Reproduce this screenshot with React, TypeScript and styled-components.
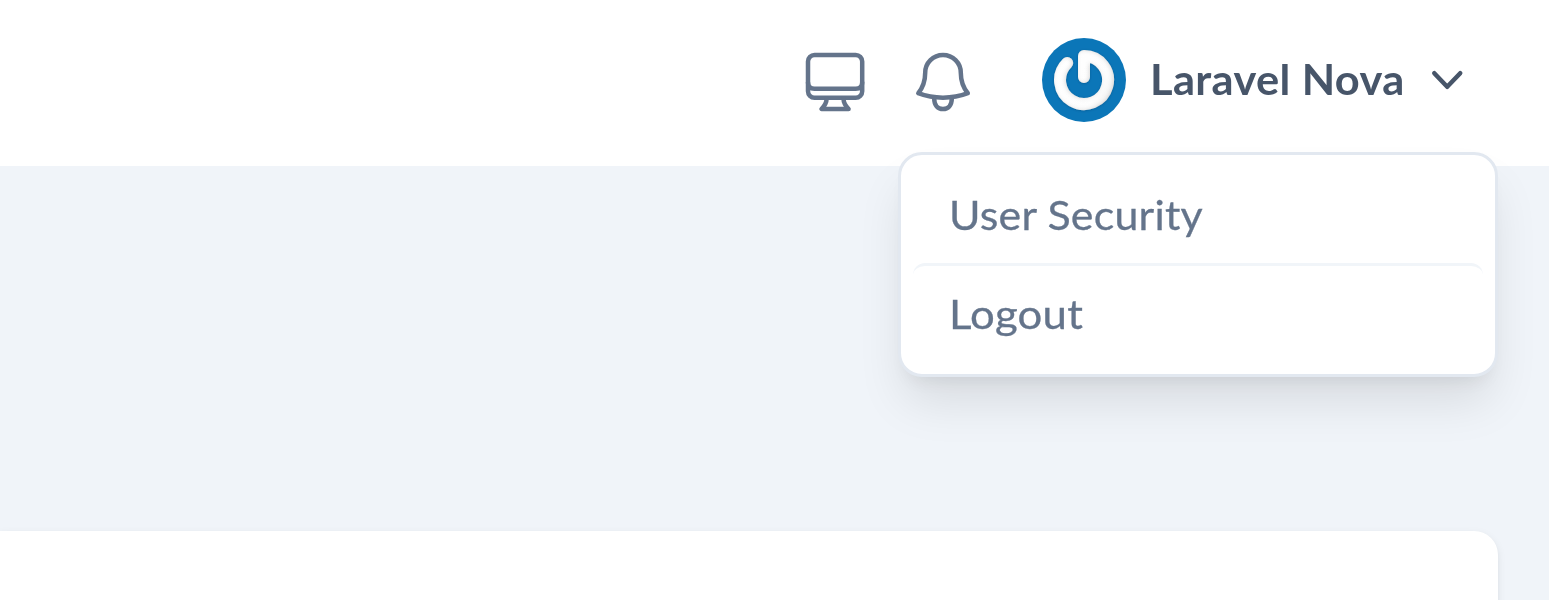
import React from "react";
import styled, { createGlobalStyle } from "styled-components";

const GlobalStyle = createGlobalStyle`
  *, *::before, *::after { box-sizing: border-box; }
  body {
    margin: 0;
    background: #f0f4f9;
    font-family: Lato, "Open Sans", sans-serif;
    overflow: hidden;
  }
`;

const Page = styled.div`
  height: 600px;
  display: flex;
  flex-direction: column;
  overflow: hidden;
  background: #f0f4f9;
`;

const Header = styled.header`
  position: relative;
  z-index: 1;
  flex: none;
  height: 166px;
  padding: 0 85px 6px 0;
  display: flex;
  align-items: center;
  justify-content: flex-end;
  background: #ffffff;
`;

const HeaderButton = styled.button<{ $gap: number }>`
  width: 72px;
  height: 72px;
  margin: 0 ${(p) => p.$gap}px 0 0;
  padding: 0;
  border: 0;
  background: transparent;
  color: #64748b;
  svg { display: block; }
`;

const UserMenu = styled.button`
  display: flex;
  align-items: center;
  padding: 0;
  border: 0;
  background: transparent;
  color: #475569;
  font-family: inherit;
  svg { display: block; flex: none; }
`;

const UserName = styled.span`
  display: flex;
  width: 305px;
  padding: 0 0 2px 24px;
  font-size: 41.5px;
  font-weight: 700;
  line-height: 54px;
  letter-spacing: 0.35px;
`;

const Label = styled.span<{ $stretch: number }>`
  display: inline-block;
  white-space: nowrap;
  transform: scaleX(${(p) => p.$stretch});
  transform-origin: left center;
`;

const Dropdown = styled.nav`
  position: absolute;
  top: 152px;
  right: 51px;
  width: 600px;
  height: 225px;
  padding: 12px;
  border: 3px solid #e2e8f0;
  border-radius: 24px;
  background: #ffffff;
  box-shadow: 0 30px 48px -6px rgba(0, 0, 0, 0.1), 0 12px 18px -10px rgba(0, 0, 0, 0.08);
`;

const MenuItem = styled.a<{ $divided?: boolean }>`
  display: flex;
  align-items: center;
  height: ${(p) => (p.$divided ? 99 : 96)}px;
  padding: 0 0 3px 36px;
  border-top: ${(p) => (p.$divided ? "3px solid #f1f5f9" : "0")};
  border-radius: 12px;
  color: #64748b;
  font-size: 41.5px;
  line-height: 54px;
  letter-spacing: 0.2px;
  -webkit-text-stroke: 0.3px currentColor;
`;

const Content = styled.main`
  flex: 1;
  padding: 365px 51px 0 0;
`;

const Card = styled.section`
  height: 200px;
  border-radius: 0 24px 24px 0;
  background: #ffffff;
  box-shadow: 0 3px 9px rgba(0, 0, 0, 0.08), 0 3px 6px -3px rgba(0, 0, 0, 0.08);
`;

const MonitorIcon = () => (
  <svg width="72" height="72" viewBox="799 44 72 72" fill="none" stroke="currentColor" strokeWidth="4.5" strokeLinejoin="round" strokeLinecap="round">
    <rect x="808" y="55" width="54.2" height="42.7" rx="6.5" />
    <path d="M808 82.5Q808 88.7 814.5 88.7H855.7Q862.2 88.7 862.2 82.5" />
    <path d="M826.6 98.5C826.6 103.5 824.5 106 821.5 109H848.6C845.6 106 843.5 103.5 843.5 98.5" />
  </svg>
);

const BellIcon = () => (
  <svg width="72" height="72" viewBox="907 44 72 72" fill="none" stroke="currentColor" strokeWidth="4.5" strokeLinejoin="round" strokeLinecap="round">
    <path d="M943 55A17.8 17.8 0 0 0 925.2 72.8C925.2 82 922.5 88 918.3 93.2Q930 97.7 943 97.7T967.8 93.2C963.5 88 960.8 82 960.8 72.8A17.8 17.8 0 0 0 943 55Z" />
    <path d="M934.2 98.5C934.2 105.5 938 109 943 109S951.8 105.5 951.8 98.5" />
  </svg>
);

const Avatar = () => (
  <svg width="84" height="84" viewBox="0 0 84 84" fill="none" role="img" aria-label="Avatar">
    <defs>
      <linearGradient id="ringFill" x1="12" y1="24" x2="72" y2="60" gradientUnits="userSpaceOnUse">
        <stop offset="0" stopColor="#ffffff" />
        <stop offset="0.75" stopColor="#fdfdfd" />
        <stop offset="1" stopColor="#f0f0f0" />
      </linearGradient>
      <filter id="ringShade" x="-20%" y="-20%" width="140%" height="140%">
        <feGaussianBlur in="SourceAlpha" stdDeviation="2" result="soft" />
        <feOffset in="soft" dx="-1" dy="-0.5" result="shifted" />
        <feComposite in="SourceAlpha" in2="shifted" operator="out" result="edge" />
        <feFlood floodColor="#777777" floodOpacity="0.38" />
        <feComposite in2="edge" operator="in" result="shade" />
        <feDropShadow in="SourceGraphic" dx="0" dy="0.5" stdDeviation="0.8" floodColor="#003b66" floodOpacity="0.45" result="base" />
        <feMerge>
          <feMergeNode in="base" />
          <feMergeNode in="shade" />
        </feMerge>
      </filter>
    </defs>
    <circle cx="42" cy="42" r="42" fill="#0b76b8" />
    <path
      d="M42 39V18A24 24 0 1 1 25.2 24.9"
      stroke="url(#ringFill)"
      strokeWidth="12"
      strokeLinecap="round"
      strokeLinejoin="round"
      filter="url(#ringShade)"
    />
  </svg>
);

const ChevronIcon = () => (
  <svg width="33" height="28" viewBox="1431 66 33 28" fill="none" stroke="currentColor" strokeWidth="4.5" strokeLinecap="round" strokeLinejoin="round">
    <path d="M1434.3 73.2L1447.2 86.8L1460.2 73.2" />
  </svg>
);

export default function App() {
  return (
    <Page>
      <GlobalStyle />
      <Header>
        <HeaderButton $gap={36} aria-label="Theme">
          <MonitorIcon />
        </HeaderButton>
        <HeaderButton $gap={63} aria-label="Notifications">
          <BellIcon />
        </HeaderButton>
        <UserMenu>
          <Avatar />
          <UserName>
            <Label $stretch={1.046}>Laravel Nova</Label>
          </UserName>
          <ChevronIcon />
        </UserMenu>
        <Dropdown>
          <MenuItem>
            <Label $stretch={1.034}>User Security</Label>
          </MenuItem>
          <MenuItem $divided>
            <Label $stretch={1.054}>Logout</Label>
          </MenuItem>
        </Dropdown>
      </Header>
      <Content>
        <Card />
      </Content>
    </Page>
  );
}
